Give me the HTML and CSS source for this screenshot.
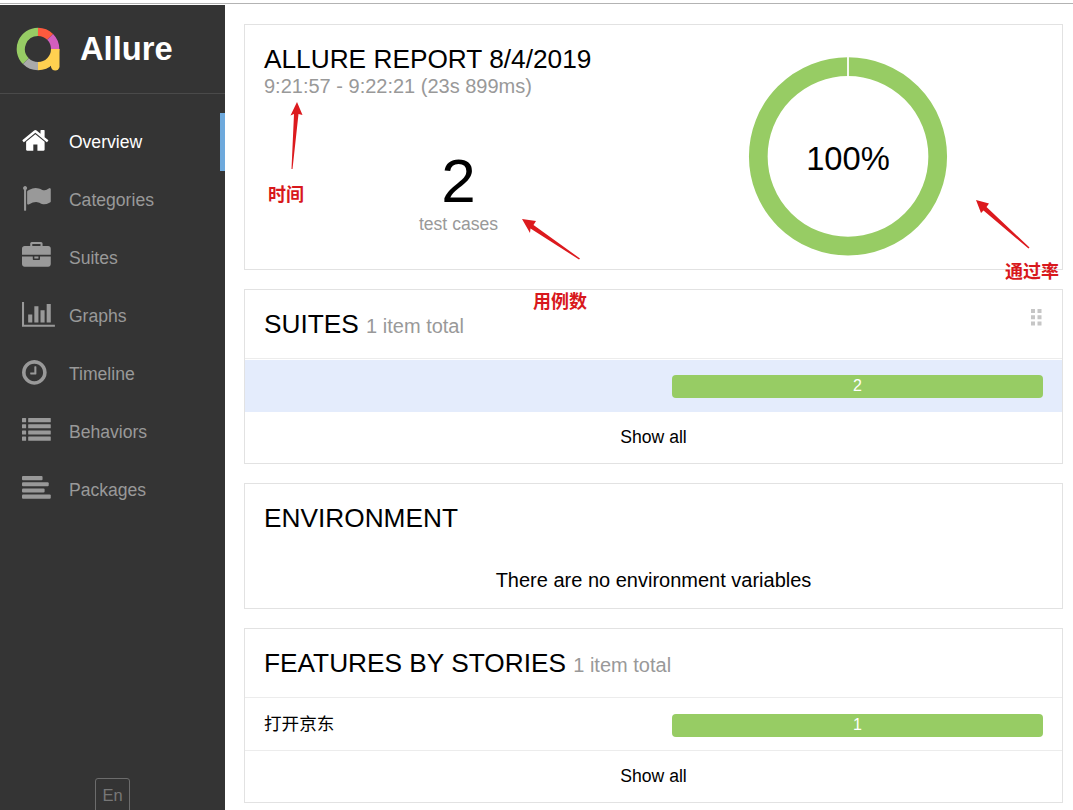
FILE: index.html
```html
<!DOCTYPE html>
<html lang="en">
<head>
  <meta charset="UTF-8">
  <meta name="viewport" content="width=device-width, initial-scale=1.0">
  <title>Allure Report</title>
  <link rel="stylesheet" href="styles.css">
</head>
<body>
  <div class="app">
    <aside class="side-nav">
      <div class="brand">
        <svg class="brand-logo" width="46" height="46" viewBox="0 0 46 46" fill="none" stroke-width="8.3">
          <path stroke="#97cc64" d="M22 4.85A17.15 17.15 0 0 0 9.87 34.13"/>
          <path stroke="#aaa" d="M9.87 34.13A17.15 17.15 0 0 0 22 39.15"/>
          <path stroke="#fd5a3e" d="M22 4.85A17.15 17.15 0 0 1 34.13 9.87"/>
          <path stroke="#d35ebe" d="M34.13 9.87A17.15 17.15 0 0 1 39.15 22"/>
          <path stroke="#ffd050" d="M22 39.15A17.15 17.15 0 0 0 39.15 22"/>
          <path fill="#ffd050" d="M35 22h8.5v17.2a4.2 4.2 0 0 1-8.5 0z"/>
        </svg>
        <span class="brand-text">Allure</span>
      </div>
      <ul class="menu">
        <li class="menu-item active">
          <svg class="menu-icon" viewBox="64 0 2048 1792"><path d="M1472 992v480q0 26-19 45t-45 19h-384v-384h-256v384h-384q-26 0-45-19t-19-45v-480q0-1 .5-3t.5-3l575-474 575 474q1 2 1 6zm223-69l-62 74q-8 9-21 11h-3q-13 0-21-7l-692-577-692 577q-12 8-24 7-13-2-21-11l-62-74q-8-10-7-23.5t11-21.5l719-599q32-26 76-26t76 26l244 204v-195q0-14 9-23t23-9h192q14 0 23 9t9 23v408l219 182q10 8 11 21.5t-7 23.5z"/></svg>
          <span>Overview</span>
        </li>
        <li class="menu-item">
          <svg class="menu-icon" viewBox="0 0 2048 1792"><path d="M320 256q0 72-64 110v1266q0 13-9.500 22.500t-22.500 9.500h-64q-13 0-22.500-9.500t-9.500-22.500v-1266q-64-38-64-110 0-53 37.500-90.500t90.500-37.500 90.500 37.500 37.500 90.500zm1472 64v763q0 25-12.500 38.500t-39.500 27.500q-215 116-369 116-61 0-123.500-22t-108.500-48-115.500-48-142.500-22q-192 0-464 146-17 9-33 9-26 0-45-19t-19-45v-742q0-32 31-55 21-14 79-43 236-120 421-120 107 0 200 29t219 88q38 19 88 19 54 0 117.500-21t110-47 88-47 54.500-21q26 0 45 19t19 45z"/></svg>
          <span>Categories</span>
        </li>
        <li class="menu-item">
          <svg class="menu-icon" viewBox="0 0 2048 1792"><path d="M640 256h512v-128h-512v128zm1152 640v480q0 66-47 113t-113 47h-1472q-66 0-113-47t-47-113v-480h672v160q0 26 19 45t45 19h320q26 0 45-19t19-45v-160h672zm-768 0v128h-256v-128h256zm768-480v384h-1792v-384q0-66 47-113t113-47h352v-160q0-40 28-68t68-28h576q40 0 68 28t28 68v160h352q66 0 113 47t47 113z"/></svg>
          <span>Suites</span>
        </li>
        <li class="menu-item">
          <svg class="menu-icon" viewBox="0 0 2048 1792"><path d="M640 896v512h-256v-512h256zm384-512v1024h-256v-1024h256zm1024 1152v128h-2048v-1536h128v1408h1920zm-640-896v768h-256v-768h256zm384-384v1152h-256v-1152h256z"/></svg>
          <span>Graphs</span>
        </li>
        <li class="menu-item">
          <svg class="menu-icon" viewBox="128 0 2048 1792"><path d="M1024 544v448q0 14-9 23t-23 9h-320q-14 0-23-9t-9-23v-64q0-14 9-23t23-9h224v-352q0-14 9-23t23-9h64q14 0 23 9t9 23zm416 352q0-148-73-273t-198-198-273-73-273 73-198 198-73 273 73 273 198 198 273 73 273-73 198-198 73-273zm224 0q0 209-103 385.500t-279.500 279.500-385.500 103-385.500-103-279.500-279.500-103-385.500 103-385.500 279.500-279.500 385.500-103 385.500 103 279.500 279.500 103 385.500z"/></svg>
          <span>Timeline</span>
        </li>
        <li class="menu-item">
          <svg class="menu-icon" viewBox="0 0 2048 1792">
            <rect x="0" y="128" width="256" height="256" rx="32"/><rect x="384" y="128" width="1408" height="256" rx="32"/>
            <rect x="0" y="512" width="256" height="256" rx="32"/><rect x="384" y="512" width="1408" height="256" rx="32"/>
            <rect x="0" y="896" width="256" height="256" rx="32"/><rect x="384" y="896" width="1408" height="256" rx="32"/>
            <rect x="0" y="1280" width="256" height="256" rx="32"/><rect x="384" y="1280" width="1408" height="256" rx="32"/>
          </svg>
          <span>Behaviors</span>
        </li>
        <li class="menu-item">
          <svg class="menu-icon" viewBox="0 0 2048 1792">
            <rect y="128" width="1280" height="256" rx="64"/>
            <rect y="512" width="1664" height="256" rx="64"/>
            <rect y="896" width="1408" height="256" rx="64"/>
            <rect y="1280" width="1792" height="256" rx="64"/>
          </svg>
          <span>Packages</span>
        </li>
      </ul>
      <div class="side-footer">
        <button class="lang-button" type="button">En</button>
      </div>
    </aside>

    <main class="content">
      <section class="widget summary">
        <div class="summary-info">
          <h2 class="widget-title">ALLURE REPORT 8/4/2019</h2>
          <div class="summary-time">9:21:57 - 9:22:21 (23s 899ms)</div>
          <div class="summary-count">
            <div class="count-value">2</div>
            <div class="count-label">test cases</div>
          </div>
        </div>
        <div class="summary-chart">
          <svg width="200" height="200" viewBox="0 0 200 200">
            <circle cx="100" cy="100.400" r="89.7" fill="none" stroke="#97cc64" stroke-width="18.700"/>
            <path d="M100 0v21" stroke="#fff" stroke-width="1.800"/>
            <text class="chart-text" x="100" y="114" text-anchor="middle">100%</text>
          </svg>
        </div>
      </section>

      <section class="widget">
        <div class="widget-header">
          <h2 class="widget-title">SUITES <small>1 item total</small></h2>
          <svg class="grip" width="11" height="17" viewBox="0 0 11 17">
            <path d="M0 0h4v4H0zM6.500 0h4v4h-4zM0 6.300h4v4H0zM6.500 6.300h4v4h-4zM0 12.500h4v4H0zM6.500 12.500h4v4h-4z"/>
          </svg>
        </div>
        <div class="row hovered">
          <span></span>
          <div class="bar">2</div>
        </div>
        <div class="show-all">Show all</div>
      </section>

      <section class="widget environment">
        <h2 class="widget-title">ENVIRONMENT</h2>
        <div class="empty">There are no environment variables</div>
      </section>

      <section class="widget">
        <div class="widget-header">
          <h2 class="widget-title">FEATURES BY STORIES <small>1 item total</small></h2>
        </div>
        <div class="row">
          <span class="row-name">打开京东</span>
          <div class="bar">1</div>
        </div>
        <div class="show-all">Show all</div>
      </section>
    </main>

    <!-- Notes drawn over the report -->
    <svg class="arrows" width="1073" height="810" viewBox="0 0 1073 810">
      <path d="M297 102L302.500 115L298.500 114L292.500 169H291.500L294 114L290.500 115.500Z"/>
      <path d="M522 219L536 221L533.500 225L580 258.500L579 259.500L530.500 228.500L530 233Z"/>
      <path d="M976 200L989 203.500L986.500 207L1029.500 247.500L1028.500 248.500L983.500 210.500L981 213Z"/>
    </svg>
    <span class="note note-time">时间</span>
    <span class="note note-cases">用例数</span>
    <span class="note note-rate">通过率</span>
  </div>
</body>
</html>
```
FILE: styles.css
```css
* {
  box-sizing: border-box;
}
body {
  margin: 0;
  padding-top: 3px;
  height: 810px;
  overflow: hidden;
  background-color: #fff;
  color: #000;
  font-family: "Liberation Sans", "Noto Sans CJK SC", Arial, sans-serif;
  font-size: 17.6px;
}
.app {
  display: flex;
  height: 807px;
  border-top: 1px solid #b3b3b3;
}

/* Sidebar */
.side-nav {
  display: flex;
  flex-direction: column;
  width: 225px;
  margin-top: 1px;
  background-color: #343434;
  color: #999;
}
.brand {
  display: flex;
  align-items: center;
  height: 89px;
  padding-left: 16px;
  border-bottom: 1px solid #4a4a4a;
}
.brand-logo {
  margin-top: 2px;
}
.brand-text {
  margin-left: 18px;
  color: #fff;
  font-size: 32.7px;
  font-weight: bold;
}
.menu {
  margin: 0;
  padding: 19px 0 0;
  list-style: none;
}
.menu-item {
  display: flex;
  align-items: center;
  height: 58px;
  padding-left: 22px;
}
.menu-item.active {
  color: #fff;
  border-right: 5px solid #6ea9dc;
}
.menu-icon {
  width: 32.9px;
  height: 28.8px;
  margin-right: 14px;
  margin-bottom: 3px;
  fill: currentColor;
}
.side-footer {
  margin-top: auto;
  display: flex;
  justify-content: center;
}
.lang-button {
  width: 35px;
  height: 35px;
  margin-bottom: -3px;
  padding: 0;
  border: 1px solid #6c6c6c;
  border-radius: 3px;
  background: none;
  color: #777;
  font-family: inherit;
  font-size: 16.5px;
}

/* Widgets */
.content {
  flex: 1;
  display: flex;
  flex-direction: column;
  gap: 19px;
  padding: 20px 10px 0 19px;
}
.widget {
  border: 1px solid #e2e2e2;
}
.widget-title {
  margin: 0;
  font-size: 26.25px;
  font-weight: normal;
  line-height: 30px;
}
.widget-title small {
  color: #999;
  font-size: 20px;
}
.widget-header {
  display: flex;
  justify-content: space-between;
  height: 69px;
  padding: 19px 20px 0 19px;
  border-bottom: 1px solid #ececec;
}
.grip {
  fill: #c6c6c6;
}
.row {
  display: flex;
  justify-content: space-between;
  height: 53px;
  padding: 16px 19px 0;
  border-bottom: 1px solid #ececec;
}
.row.hovered {
  padding-top: 15px;
  border-top: 1px solid #fff;
  border-bottom-color: #e4ecfc;
  background-color: #e4ecfc;
}
.row-name {
  line-height: 20px;
}
.bar {
  width: 371px;
  height: 23px;
  border-radius: 4px;
  background-color: #97cc64;
  color: #fff;
  font-size: 16px;
  line-height: 22px;
  text-align: center;
}
.show-all {
  height: 51px;
  line-height: 50px;
  text-align: center;
}

/* Summary */
.summary {
  display: flex;
  height: 246px;
}
.summary-info {
  width: 427px;
  padding: 19px 0 0 19px;
}
.summary-time {
  color: #999;
  font-size: 20px;
  line-height: 24px;
}
.summary-count {
  width: 389px;
  margin-top: 49px;
  text-align: center;
}
.count-value {
  font-size: 62px;
  line-height: 68px;
}
.count-label {
  color: #999;
  line-height: 18px;
}
.summary-chart {
  padding: 31px 0 0 76px;
}
.chart-text {
  font-size: 32.7px;
}

/* Environment */
.environment {
  height: 126px;
  padding: 19px 19px 0;
}
.empty {
  margin-top: 35px;
  font-size: 20px;
  line-height: 24px;
  text-align: center;
}

/* Notes */
.arrows {
  position: absolute;
  top: 0;
  left: 0;
  fill: #dc1a1e;
}
.note {
  position: absolute;
  color: #d8181c;
  font-family: "Noto Sans CJK SC", sans-serif;
  font-size: 18px;
  font-weight: bold;
  line-height: 24px;
}
.note-time {
  top: 181px;
  left: 268px;
}
.note-cases {
  top: 288px;
  left: 533px;
}
.note-rate {
  top: 258px;
  left: 1005px;
}
```
